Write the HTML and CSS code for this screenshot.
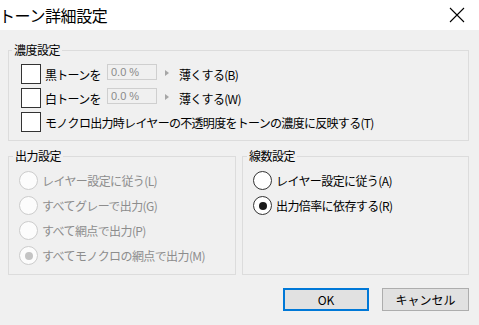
FILE: index.html
```html
<!DOCTYPE html>
<html lang="ja">
<head>
    <meta charset="UTF-8">
    <meta name="viewport" content="width=device-width, initial-scale=1.0">
    <title>トーン詳細設定</title>
    <link rel="stylesheet" href="styles.css">
</head>
<body>
    <div class="titlebar">
        <span class="title">トーン詳細設定</span>
        <svg class="close" viewBox="0 0 16 16">
            <path d="M1 1L15 15M15 1L1 15" stroke="#000" stroke-width="1.1" fill="none"/>
        </svg>
    </div>

    <div class="content">
        <fieldset class="group density">
            <legend>濃度設定</legend>
            <div class="row">
                <span class="check"></span>
                <span class="tone-label">黒トーンを</span>
                <span class="field">0.0 %</span>
                <span class="arrow"></span>
                <span>薄くする(B)</span>
            </div>
            <div class="row">
                <span class="check"></span>
                <span class="tone-label">白トーンを</span>
                <span class="field">0.0 %</span>
                <span class="arrow"></span>
                <span>薄くする(W)</span>
            </div>
            <div class="row last">
                <span class="check"></span>
                <span>モノクロ出力時レイヤーの不透明度をトーンの濃度に反映する(T)</span>
            </div>
        </fieldset>

        <div class="groups">
            <fieldset class="group output">
                <legend>出力設定</legend>
                <div class="option disabled"><span class="radio"></span>レイヤー設定に従う(L)</div>
                <div class="option disabled"><span class="radio"></span>すべてグレーで出力(G)</div>
                <div class="option disabled"><span class="radio"></span>すべて網点で出力(P)</div>
                <div class="option disabled last"><span class="radio checked"></span>すべてモノクロの網点で出力(M)</div>
            </fieldset>
            <fieldset class="group lines">
                <legend>線数設定</legend>
                <div class="option"><span class="radio"></span>レイヤー設定に従う(A)</div>
                <div class="option"><span class="radio checked"></span>出力倍率に依存する(R)</div>
            </fieldset>
        </div>

        <div class="buttons">
            <button class="btn default">OK</button>
            <button class="btn">キャンセル</button>
        </div>
    </div>
</body>
</html>
```

FILE: styles.css
```css
body {
    margin: 0;
    width: 479px;
    height: 325px;
    overflow: hidden;
    background: #f0f0f0;
    font-family: "Noto Sans CJK JP", "Noto Sans", sans-serif;
    font-size: 12px;
    color: #000;
}

.titlebar {
    height: 30px;
    background: #fff;
    display: flex;
    align-items: center;
    justify-content: space-between;
}

.title {
    font-size: 16px;
    line-height: 30px;
    margin-left: -1px;
    letter-spacing: -0.4px;
}

.close {
    width: 16px;
    height: 16px;
    margin-right: 14px;
}

.content {
    padding: 12px 10px 0 8px;
}

.group {
    margin: 0;
    border: 1px solid #dcdcdc;
    min-width: 0;
    padding: 6px 10px 8px 12px;
}

.group legend {
    padding: 0 2px;
    line-height: 16px;
    margin-left: -9px;
    letter-spacing: -0.5px;
}

.row {
    display: flex;
    align-items: center;
    height: 20px;
    margin-bottom: 4px;
    letter-spacing: -0.7px;
    white-space: nowrap;
}

.row.last {
    margin-top: 3px;
    margin-bottom: 0;
}

.check {
    width: 18px;
    height: 18px;
    border: 1px solid #333;
    background: #fff;
    margin-right: 4px;
    flex: none;
}

.tone-label {
    width: 62px;
}

.field {
    width: 45px;
    height: 14px;
    border: 1px solid #cfcfcf;
    padding-left: 3px;
    margin-top: -4px;
    font-family: "Liberation Sans", sans-serif;
    font-size: 11px;
    line-height: 14px;
    color: #8a8a8a;
    letter-spacing: 0;
    margin-right: 8px;
}

.arrow {
    width: 0;
    height: 0;
    border-left: 4px solid #a6a6a6;
    border-top: 3px solid transparent;
    border-bottom: 3px solid transparent;
    margin-right: 10px;
    margin-top: -2px;
}

.groups {
    display: flex;
    gap: 6px;
    margin-top: 7px;
}

.output {
    width: 228px;
    box-sizing: border-box;
    padding: 7px 10px 9px 10px;
}

.lines {
    flex: 1;
    padding: 7px 10px 9px 10px;
}

.output legend,
.lines legend {
    margin-left: -6px;
}

.option {
    display: flex;
    align-items: center;
    height: 19px;
    margin-bottom: 6px;
    letter-spacing: -0.6px;
    white-space: nowrap;
}

.option.last {
    margin-top: 3px;
    margin-bottom: 0;
}

.radio {
    width: 17px;
    height: 17px;
    border: 1px solid #333;
    border-radius: 50%;
    background: #fff;
    margin-right: 4px;
    flex: none;
    display: flex;
    align-items: center;
    justify-content: center;
}

.radio.checked::after {
    content: "";
    width: 8px;
    height: 8px;
    border-radius: 50%;
    background: #1a1a1a;
}

.disabled {
    color: #8d8d8d;
}

.disabled .radio {
    border-color: #cccccc;
    background: #fcfcfc;
}

.disabled .radio.checked::after {
    background: #c4c4c4;
}

.buttons {
    display: flex;
    justify-content: flex-end;
    gap: 13px;
    margin-top: 13px;
}

.btn {
    width: 87px;
    height: 23px;
    background: #e1e1e1;
    border: 1px solid #adadad;
    font-family: "Noto Sans CJK JP", sans-serif;
    font-size: 12px;
    color: #000;
    padding: 0;
}

.btn.default {
    width: 86px;
    border: 2px solid #0078d7;
}
```
